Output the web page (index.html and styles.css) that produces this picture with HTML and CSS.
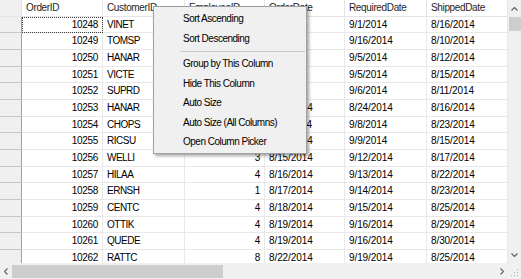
FILE: index.html
```html
<!DOCTYPE html>
<html lang="en">
<head>
    <meta charset="UTF-8">
    <title>Orders Grid</title>
    <link rel="stylesheet" href="styles.css">
</head>
<body>
    <div class="grid">
        <div class="grid-main">
            <div class="table">
                <div class="row head">
                    <div class="corner"></div>
                    <div class="hcell">OrderID</div>
                    <div class="hcell">CustomerID</div>
                    <div class="hcell">EmployeeID</div>
                    <div class="hcell">OrderDate</div>
                    <div class="hcell">RequiredDate</div>
                    <div class="hcell">ShippedDate</div>
                </div>
                <div class="rows" id="rows"></div>
            </div>
            <div class="vscroll">
                <div class="arrow up"><svg width="7" height="4" viewBox="0 0 7 4"><path d="M0.5 3.5 L3.5 0.5 L6.5 3.5" fill="none" stroke="#606060" stroke-width="1.2"/></svg></div>
                <div class="vthumb"></div>
                <div class="vtrack"></div>
                <div class="arrow down"><svg width="7" height="4" viewBox="0 0 7 4"><path d="M0.5 0.5 L3.5 3.5 L6.5 0.5" fill="none" stroke="#606060" stroke-width="1.2"/></svg></div>
            </div>
        </div>
        <div class="hscroll">
            <div class="harrow"><svg width="4" height="7" viewBox="0 0 4 7"><path d="M3.5 0.5 L0.5 3.5 L3.5 6.5" fill="none" stroke="#606060" stroke-width="1.2"/></svg></div>
            <div class="hthumb"></div>
            <div class="htrack"></div>
            <div class="harrow"><svg width="4" height="7" viewBox="0 0 4 7"><path d="M0.5 0.5 L3.5 3.5 L0.5 6.5" fill="none" stroke="#606060" stroke-width="1.2"/></svg></div>
            <div class="grip">
                <svg width="8" height="8" viewBox="0 0 8 8" fill="#b0b0b0">
                    <rect x="6" y="0" width="1" height="1"/>
                    <rect x="3" y="3" width="1" height="1"/><rect x="6" y="3" width="1" height="1"/>
                    <rect x="0" y="6" width="1" height="1"/><rect x="3" y="6" width="1" height="1"/><rect x="6" y="6" width="1" height="1"/>
                </svg>
            </div>
        </div>
    </div>

    <div class="menu">
        <div class="item">Sort Ascending</div>
        <div class="item">Sort Descending</div>
        <div class="sep"></div>
        <div class="item">Group by This Column</div>
        <div class="item">Hide This Column</div>
        <div class="item">Auto Size</div>
        <div class="item">Auto Size (All Columns)</div>
        <div class="item">Open Column Picker</div>
    </div>

    <script>
        // Orders data
        const orders = [
            [10248, 'VINET', 5, '8/4/2014', '9/1/2014', '8/16/2014'],
            [10249, 'TOMSP', 6, '8/5/2014', '9/16/2014', '8/10/2014'],
            [10250, 'HANAR', 4, '8/8/2014', '9/5/2014', '8/12/2014'],
            [10251, 'VICTE', 3, '8/8/2014', '9/5/2014', '8/15/2014'],
            [10252, 'SUPRD', 4, '8/9/2014', '9/6/2014', '8/11/2014'],
            [10253, 'HANAR', 3, '8/10/2014', '8/24/2014', '8/16/2014'],
            [10254, 'CHOPS', 5, '8/11/2014', '9/8/2014', '8/23/2014'],
            [10255, 'RICSU', 9, '8/12/2014', '9/9/2014', '8/15/2014'],
            [10256, 'WELLI', 3, '8/15/2014', '9/12/2014', '8/17/2014'],
            [10257, 'HILAA', 4, '8/16/2014', '9/13/2014', '8/22/2014'],
            [10258, 'ERNSH', 1, '8/17/2014', '9/14/2014', '8/23/2014'],
            [10259, 'CENTC', 4, '8/18/2014', '9/15/2014', '8/25/2014'],
            [10260, 'OTTIK', 4, '8/19/2014', '9/16/2014', '8/29/2014'],
            [10261, 'QUEDE', 4, '8/19/2014', '9/16/2014', '8/30/2014'],
            [10262, 'RATTC', 8, '8/22/2014', '9/19/2014', '8/25/2014']
        ];

        const kinds = ['num id', 'text', 'num', 'date', 'date', 'date'];
        const rowsElement = document.getElementById('rows');

        orders.forEach((order, index) => {
            const row = document.createElement('div');
            row.className = 'row';
            let html = '<div class="rhead"></div>';
            order.forEach((value, col) => {
                const focus = index === 0 && col === 0 ? ' focus' : '';
                html += `<div class="cell ${kinds[col]}${focus}">${value}</div>`;
            });
            row.innerHTML = html;
            rowsElement.appendChild(row);
        });
    </script>
</body>
</html>
```

FILE: styles.css
```css
* {
    margin: 0;
    padding: 0;
    box-sizing: border-box;
}

body {
    width: 521px;
    height: 279px;
    overflow: hidden;
    background: #ffffff;
    font-family: 'Liberation Sans', Arial, sans-serif;
    font-size: 10px;
    letter-spacing: -0.5px;
    color: #000000;
}

.grid {
    display: flex;
    flex-direction: column;
    height: 279px;
}

.grid-main {
    display: flex;
    height: 263px;
}

.table {
    width: 508px;
    overflow: hidden;
}

.row {
    display: grid;
    grid-template-columns: 22px 81px 82px 80px 80px 82px 81px;
    height: 16.67px;
}

/* Header row */
.head {
    background: #ffffff;
}

.corner {
    background: #f0f0f0;
    border-right: 1px solid #e5e5e5;
    border-bottom: 1px solid #e5e5e5;
}

.hcell {
    padding: 0 4px;
    line-height: 16px;
    color: #1e1e1e;
    letter-spacing: -0.35px;
    border-right: 1px solid #e5e5e5;
    border-bottom: 1px solid #e5e5e5;
    white-space: nowrap;
    overflow: hidden;
}

/* Data rows */
.rhead {
    background: #f0f0f0;
    border-right: 1px solid #a0a0a0;
    border-bottom: 1px solid #c8c8c8;
}

.cell {
    padding: 0 4px;
    line-height: 16px;
    background: #ffffff;
    border-right: 1px solid #e8e8e8;
    border-bottom: 1px solid #e8e8e8;
    white-space: nowrap;
    overflow: hidden;
}

.cell.num {
    text-align: right;
    letter-spacing: -0.3px;
}

.cell.date {
    letter-spacing: -0.1px;
}

.cell.focus {
    outline: 1px dotted #404040;
    outline-offset: -1px;
}

/* Scrollbars */
.vscroll {
    width: 13px;
    display: flex;
    flex-direction: column;
    background: #f0f0f0;
}

.arrow {
    height: 17px;
    display: flex;
    align-items: center;
    justify-content: center;
}

.vthumb {
    height: 14px;
    margin-left: 1px;
    background: #cdcdcd;
}

.vtrack {
    flex: 1;
}

.hscroll {
    height: 16px;
    display: flex;
    align-items: center;
    background: #f0f0f0;
}

.harrow {
    width: 12px;
    height: 16px;
    display: flex;
    align-items: center;
    justify-content: center;
}

.hthumb {
    width: 211px;
    height: 13px;
    background: #cdcdcd;
}

.htrack {
    flex: 1;
}

.grip {
    width: 13px;
    height: 16px;
    display: flex;
    align-items: flex-end;
    justify-content: center;
    padding-bottom: 2px;
}

/* Context menu */
.menu {
    position: absolute;
    left: 153px;
    top: 6px;
    width: 154px;
    padding: 2px 0 1px;
    background: #f0f0f0;
    border: 1px solid #a0a0a0;
    box-shadow: 2px 2px 3px rgba(0, 0, 0, 0.35);
    color: #000000;
}

.item {
    height: 19.5px;
    line-height: 19.5px;
    padding-left: 29px;
    white-space: nowrap;
}

.sep {
    height: 6px;
    margin: 0 1px 0 26px;
    display: flex;
    align-items: center;
}

.sep::after {
    content: '';
    display: block;
    width: 100%;
    border-top: 1px solid #c8c8c8;
}
```
